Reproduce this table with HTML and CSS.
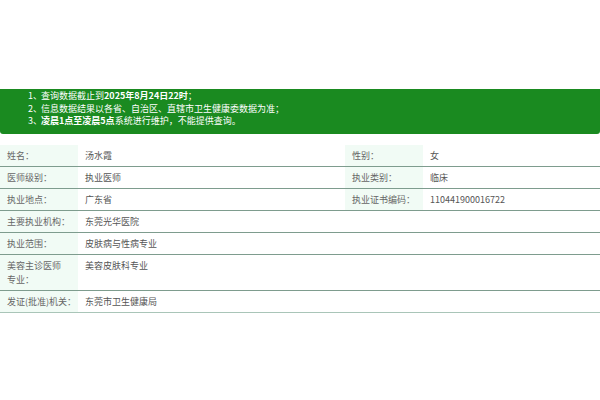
FILE: index.html
```html
<!DOCTYPE html>
<html lang="zh">
<head>
<meta charset="utf-8">
<link rel="stylesheet" href="styles.css">
</head>
<body>
<div class="page">
  <div class="notice">
    <ol class="notice-list">
      <li><span class="num">1、</span>查询数据截止到<b>2025年8月24日22时</b>；</li>
      <li><span class="num">2、</span>信息数据结果以各省、自治区、直辖市卫生健康委数据为准；</li>
      <li><span class="num">3、</span><b>凌晨1点至凌晨5点</b>系统进行维护，不能提供查询。</li>
    </ol>
  </div>
  <table class="info">
    <colgroup>
      <col class="c-label"><col class="c-val"><col class="c-label"><col>
    </colgroup>
    <tr><td class="lbl">姓名：</td><td>汤水霞</td><td class="lbl">性别：</td><td>女</td></tr>
    <tr><td class="lbl">医师级别：</td><td>执业医师</td><td class="lbl">执业类别：</td><td>临床</td></tr>
    <tr><td class="lbl">执业地点：</td><td>广东省</td><td class="lbl">执业证书编码：</td><td>110441900016722</td></tr>
    <tr><td class="lbl">主要执业机构：</td><td colspan="3">东莞光华医院</td></tr>
    <tr><td class="lbl">执业范围：</td><td colspan="3">皮肤病与性病专业</td></tr>
    <tr class="tall"><td class="lbl">美容主诊医师专业：</td><td colspan="3">美容皮肤科专业</td></tr>
    <tr class="last"><td class="lbl">发证(批准)机关：</td><td colspan="3">东莞市卫生健康局</td></tr>
  </table>
</div>
</body>
</html>
```
FILE: styles.css
```css
html, body {
  margin: 0;
  padding: 0;
  background: #ffffff;
}
body {
  font-family: "Noto Sans CJK SC", "Noto Sans", sans-serif;
}
.page {
  padding-top: 89px;
}
.notice {
  background: #1a8a20;
  color: #ffffff;
  border-radius: 0 0 3px 3px;
  padding: 1px 0 6px 28px;
  font-size: 9px;
  line-height: 12.6px;
}
.notice-list {
  list-style: none;
  margin: 0;
  padding: 0;
}
.notice-list b {
  font-weight: 700;
}
.num {
  display: inline-block;
  width: 13px;
}
.info {
  margin-top: 11px;
  width: 600px;
  border-collapse: collapse;
  table-layout: fixed;
  font-size: 9px;
  color: #555555;
}
.c-label { width: 78px; }
.c-val { width: 267px; }
.info td {
  padding: 4px 7px 3px;
  line-height: 14px;
  border-bottom: 1px solid #7e9c8e;
  vertical-align: top;
  height: 14px;
}
.info td.lbl {
  background: #f1fbf5;
  color: #666666;
  padding-right: 1px;
}
.info tr.tall td.lbl {
  padding-right: 10px;
  word-break: break-all;
  line-break: anywhere;
}
.info tr.last td.lbl {
  white-space: nowrap;
}
.info tr.last td {
  border-bottom-color: #a9c5b8;
}
```
